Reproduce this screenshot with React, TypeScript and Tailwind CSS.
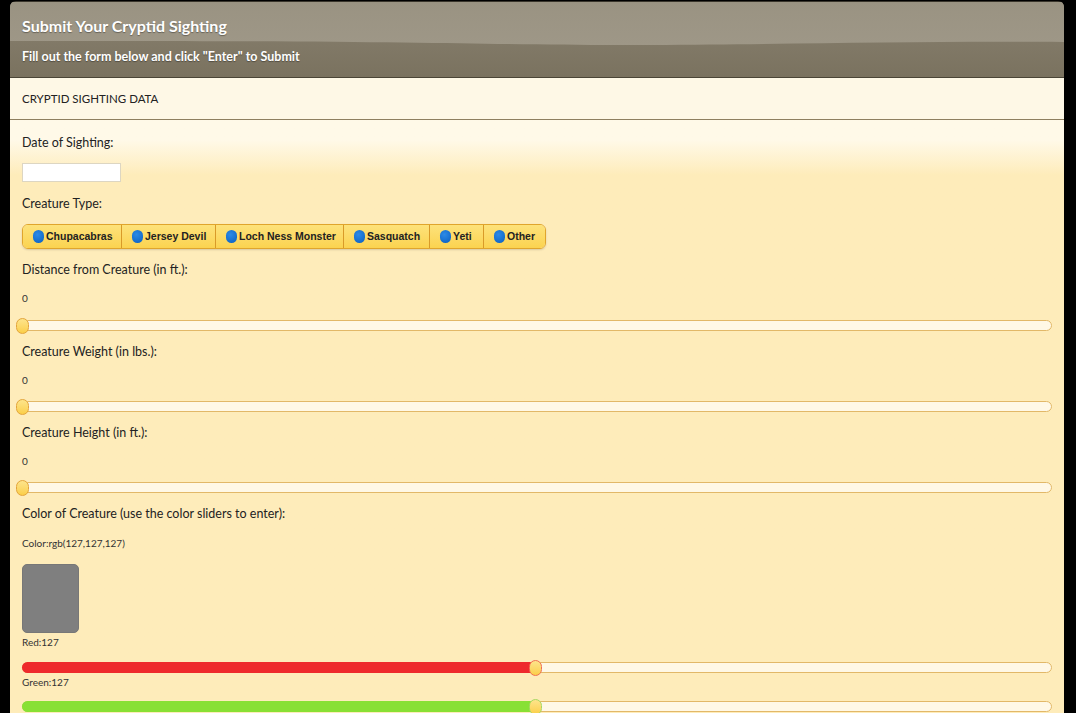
import React from "react";

const creatures = [
  { name: "Chupacabras", w: "w-[98px]" },
  { name: "Jersey Devil", w: "w-[94px]" },
  { name: "Loch Ness Monster", w: "w-[128px]" },
  { name: "Sasquatch", w: "w-[86px]" },
  { name: "Yeti", w: "w-[54px]" },
  { name: "Other", w: "w-[62px]" },
];

const TRACK = 1030;

function Slider({
  value,
  max,
  fill,
  thumbBorder = "border-[#e3a53a]",
  fillClass = "",
}: {
  value: number;
  max: number;
  fill?: boolean;
  thumbBorder?: string;
  fillClass?: string;
}) {
  const px = Math.round((value / max) * TRACK);
  return (
    <div className="relative h-[11px] w-[1030px] rounded-full border border-[#e2b868] bg-[#fff8e6]">
      {fill && (
        <div
          className={`absolute left-[-1px] top-[-1px] h-[11px] rounded-l-full ${fillClass}`}
          style={{ width: px }}
        />
      )}
      <div
        className={`absolute top-[-3px] h-[16px] w-[13px] rounded-full border bg-gradient-to-b from-[#fde48a] to-[#fbcf48] ${thumbBorder}`}
        style={{ left: px - 7 }}
      />
    </div>
  );
}

function Label({ children, className = "" }: { children: React.ReactNode; className?: string }) {
  return (
    <div className={`h-[20px] text-[12.5px] leading-[20px] text-[#222] ${className}`}>{children}</div>
  );
}

function Value({ children, className = "" }: { children: React.ReactNode; className?: string }) {
  return <div className={`h-[16px] text-[10px] leading-[16px] text-[#333] ${className}`}>{children}</div>;
}

export default function App() {
  return (
    <div className="h-[713px] w-[1076px] overflow-hidden bg-black font-['Lato',sans-serif]">
      <div className="ml-[10px] mt-[1px] w-[1054px] overflow-hidden rounded-t-[6px]">
        {/* Header */}
        <div className="relative h-[76px] border-t border-[#3a362c] bg-gradient-to-b from-[#8a8271] to-[#7a725f]">
          <svg className="absolute left-0 top-0" width="1054" height="76" viewBox="0 0 1054 76">
            <defs>
              <linearGradient id="hg" x1="0" y1="0" x2="0" y2="1">
                <stop offset="0" stopColor="#9a9382" />
                <stop offset="1" stopColor="#9e9787" />
              </linearGradient>
            </defs>
            <path d="M0 0 H1054 V40 C900 39 800 42 640 43 C500 44 420 38 0 39 Z" fill="url(#hg)" />
          </svg>
          <div className="relative px-[12px] pt-[12px]">
            <div className="h-[24px] text-[16px] font-bold leading-[24px] text-white [text-shadow:0_1px_1px_rgba(0,0,0,0.35)]">
              Submit Your Cryptid Sighting
            </div>
            <div className="mt-[9px] h-[20px] text-[12.5px] font-bold leading-[20px] text-white [text-shadow:0_1px_1px_rgba(0,0,0,0.35)]">
              Fill out the form below and click "Enter" to Submit
            </div>
          </div>
        </div>

        {/* Section bar */}
        <div className="flex h-[43px] items-center border-y border-[#4a4536] border-b-[#8e7f5f] bg-[#fef8e6] px-[12px] pt-[1px] text-[11.5px] text-[#222]">
          CRYPTID SIGHTING DATA
        </div>

        {/* Form */}
        <div className="bg-gradient-to-b from-[#fff9e8] from-[20px] to-[#feecba] to-[55px] px-[12px] pb-[20px] pt-[13px]">
          <Label>Date of Sighting:</Label>
          <div className="mt-[10px] h-[19px] w-[99px] border border-[#ddd6c2] bg-white" />

          <Label className="mt-[12px]">Creature Type:</Label>
          <div className="mt-[10px] flex h-[25px] w-fit overflow-hidden rounded-[6px] border border-[#e0a52c] shadow-[0_1px_2px_rgba(0,0,0,0.15)]">
            {creatures.map((c, i) => (
              <div
                key={c.name}
                className={`flex h-full ${c.w} items-center gap-[2px] bg-gradient-to-b from-[#fde27a] to-[#fbd34f] pl-[10px] font-['Liberation_Sans',Arial,sans-serif] text-[10.5px] font-bold text-[#222] ${
                  i > 0 ? "border-l border-[#d99a28]" : ""
                }`}
              >
                <span className="h-[13px] w-[11px] shrink-0 rounded-full bg-[radial-gradient(circle_at_40%_35%,#2c8ae6,#0a5fc0)]" />
                <span>{c.name}</span>
              </div>
            ))}
          </div>

          <Label className="mt-[11px]">Distance from Creature (in ft.):</Label>
          <Value className="mt-[10px]">0</Value>
          <div className="mt-[14px]">
            <Slider value={0} max={255} />
          </div>

          <Label className="mt-[11px]">Creature Weight (in lbs.):</Label>
          <Value className="mt-[10px]">0</Value>
          <div className="mt-[13px]">
            <Slider value={0} max={255} />
          </div>

          <Label className="mt-[11px]">Creature Height (in ft.):</Label>
          <Value className="mt-[10px]">0</Value>
          <div className="mt-[13px]">
            <Slider value={0} max={255} />
          </div>

          <Label className="mt-[11px]">Color of Creature (use the color sliders to enter):</Label>
          <Value className="mt-[11px]">Color:rgb(127,127,127)</Value>
          <div className="mt-[13px] h-[69px] w-[57px] rounded-[5px] border border-[#777] bg-[#7f7f7f]" />
          <div className="mt-[2px] h-[14px] text-[10px] leading-[14px] text-[#333]">Red:127</div>
          <div className="mt-[13px]">
            <Slider value={127} max={255} fill fillClass="bg-[#ee2a2c]" thumbBorder="border-[#f07050]" />
          </div>
          <div className="mt-[2px] h-[14px] text-[10px] leading-[14px] text-[#333]">Green:127</div>
          <div className="mt-[12px]">
            <Slider value={127} max={255} fill fillClass="bg-[#88e035]" thumbBorder="border-[#a8d860]" />
          </div>
        </div>
      </div>
    </div>
  );
}
